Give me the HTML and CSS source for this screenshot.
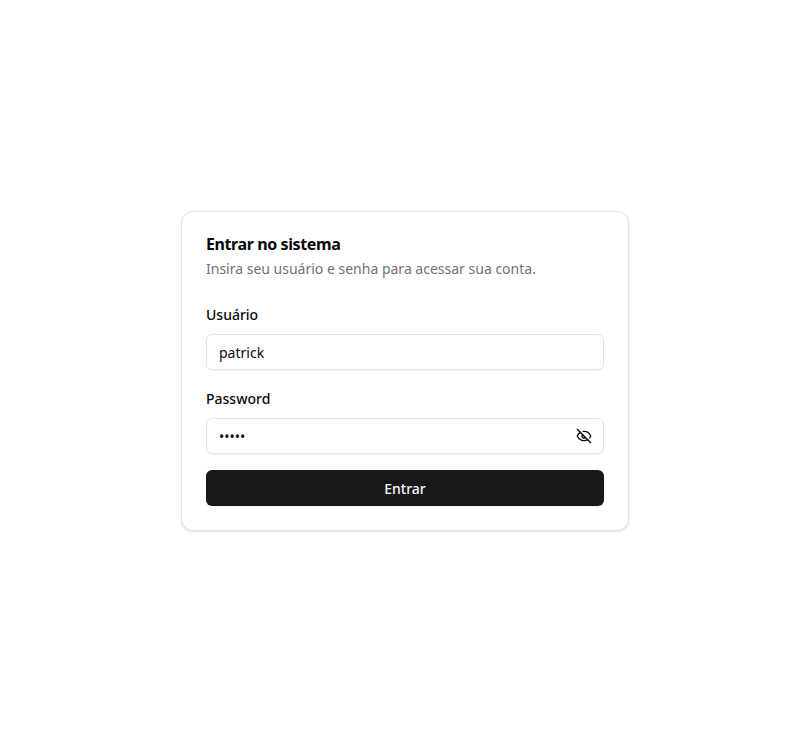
FILE: index.html
```html
<!DOCTYPE html>
<html lang="pt-BR">
<head>
<meta charset="utf-8">
<title>Entrar no sistema</title>
<link rel="stylesheet" href="styles.css">
</head>
<body>
<main class="page">
  <section class="card">
    <header class="card-header">
      <h1 class="title">Entrar no sistema</h1>
      <p class="description">Insira seu usuário e senha para acessar sua conta.</p>
    </header>
    <form class="form">
      <div class="field">
        <label class="label" for="user">Usuário</label>
        <input class="input" id="user" type="text" value="patrick">
      </div>
      <div class="field">
        <label class="label" for="password">Password</label>
        <div class="password">
          <input class="input" id="password" type="password" value="senha">
          <button class="toggle" type="button">
            <svg class="icon" viewBox="0 0 24 24" fill="none" stroke="currentColor" stroke-width="2" stroke-linecap="round" stroke-linejoin="round"><path d="M10.733 5.076a10.744 10.744 0 0 1 11.205 6.575 1 1 0 0 1 0 .696 10.747 10.747 0 0 1-1.444 2.49"/><path d="M14.084 14.158a3 3 0 0 1-4.242-4.242"/><path d="M17.479 17.499a10.75 10.75 0 0 1-15.417-5.151 1 1 0 0 1 0-.696 10.75 10.75 0 0 1 4.446-5.143"/><path d="m2 2 20 20"/></svg>
          </button>
        </div>
      </div>
      <button class="submit" type="button">Entrar</button>
    </form>
  </section>
</main>
</body>
</html>
```
FILE: styles.css
```css
* { box-sizing: border-box; margin: 0; }
body { font-family: "Noto Sans", sans-serif; font-size: 14px; line-height: 20px; color: #09090b; background: #fff; }
.page { min-height: 730px; display: flex; justify-content: center; align-items: center; padding: 12px 1px 0 0; }
.card { width: 448px; height: 320px; padding: 24px; border: 1px solid #e4e4e7; border-radius: 12px; background: #fff; box-shadow: 0 1px 3px rgba(0,0,0,.1), 0 1px 2px -1px rgba(0,0,0,.1); }
.card-header { display: flex; flex-direction: column; gap: 7px; padding-bottom: 23px; }
.title { font-size: 16px; line-height: 16px; font-weight: 700; letter-spacing: -0.4px; }
.description { color: #71717a; }
.form { display: flex; flex-direction: column; gap: 16px; }
.field { display: flex; flex-direction: column; gap: 6px; }
.label { font-weight: 500; line-height: 26px; }
.input { display: block; width: 100%; height: 36px; padding: 4px 12px; border: 1px solid #e4e4e7; border-radius: 6px; background: transparent; color: inherit; font: inherit; box-shadow: 0 1px 2px rgba(0,0,0,.05); }
.password { position: relative; }
.toggle { position: absolute; top: 0; right: 0; width: 40px; height: 36px; display: flex; align-items: center; justify-content: center; padding: 0; border: 0; background: none; color: inherit; }
.icon { width: 16px; height: 16px; }
.submit { height: 36px; padding: 2px 16px 0; border: 0; border-radius: 6px; background: #18181b; color: #fafafa; font: 500 14px/20px "Noto Sans", sans-serif; box-shadow: 0 1px 2px rgba(0,0,0,.05); }
```
